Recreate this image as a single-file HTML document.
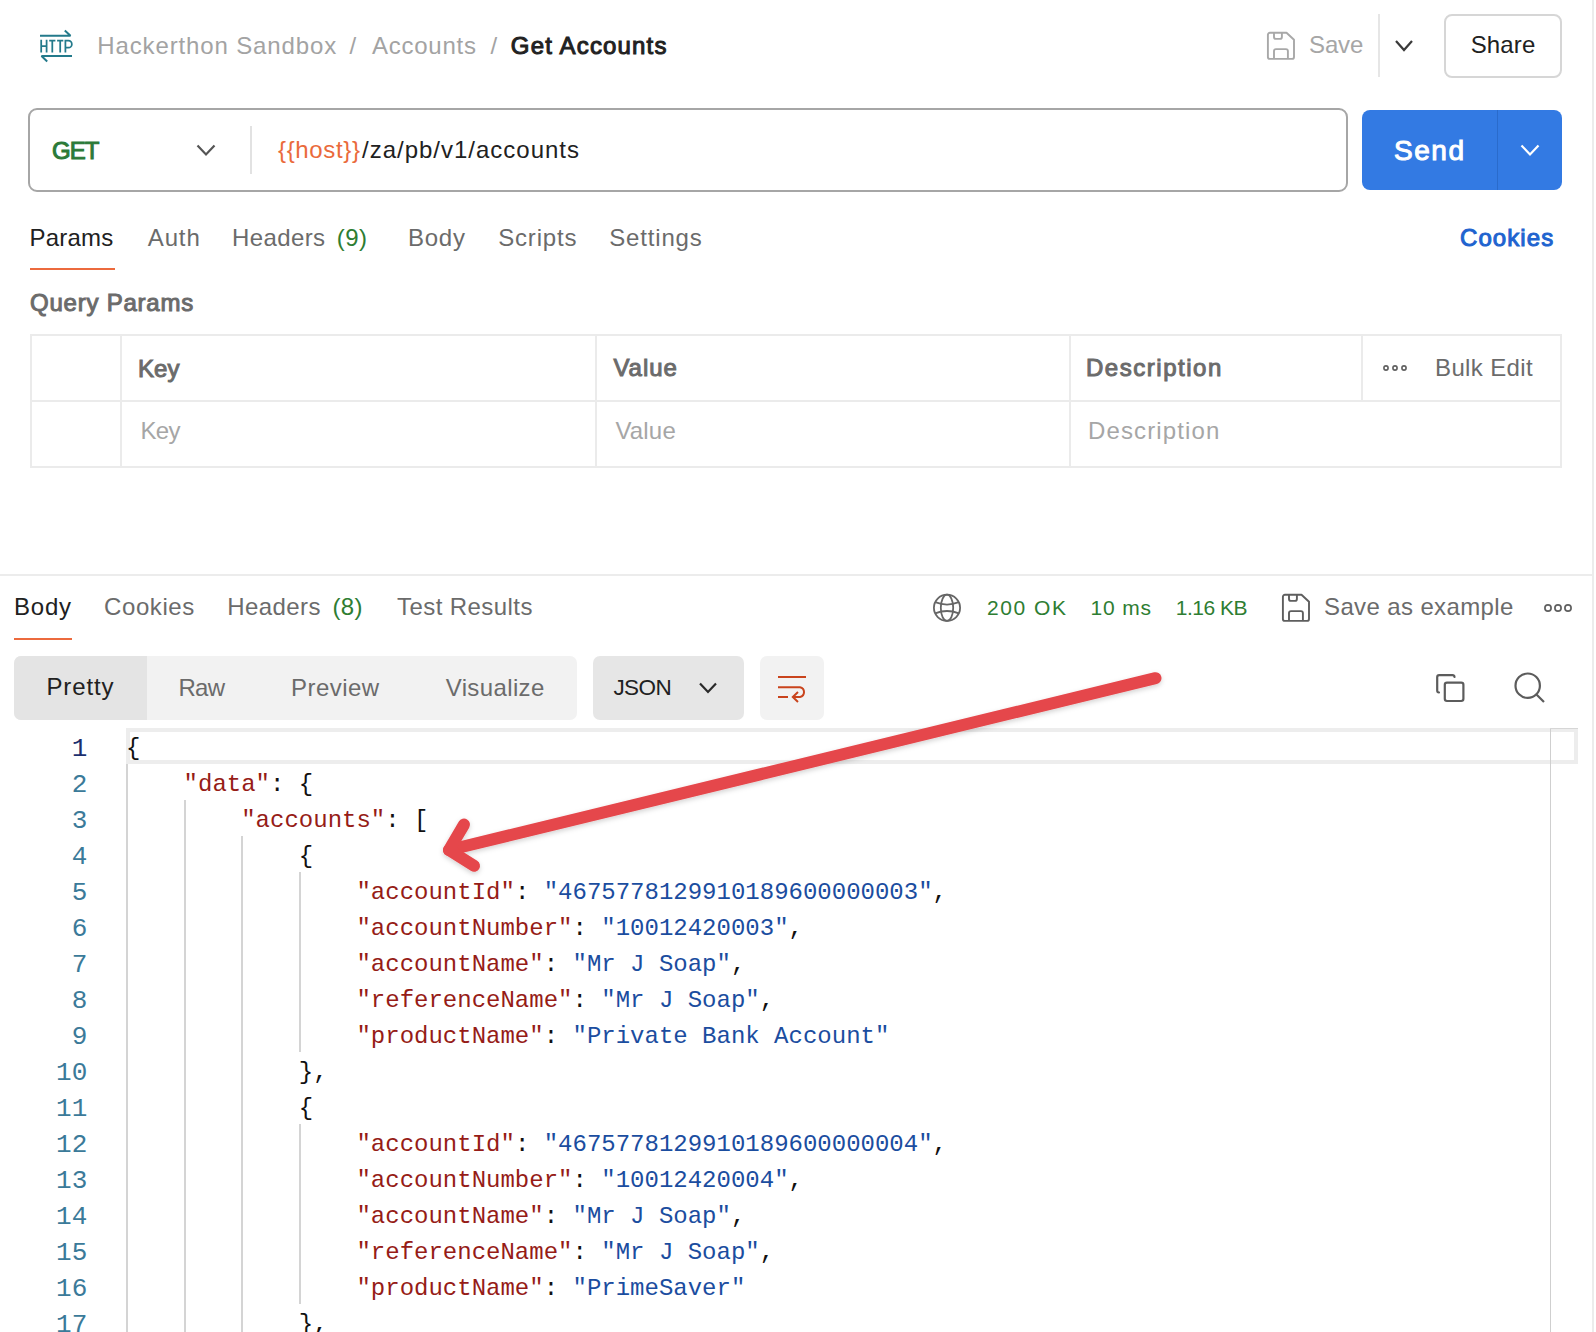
<!DOCTYPE html>
<html><head><meta charset="utf-8"><title>Get Accounts</title><style>
html,body{margin:0;padding:0;background:#fff;}
body{width:1596px;height:1332px;position:relative;overflow:hidden;font-family:"Liberation Sans", sans-serif;}
.t{position:absolute;white-space:pre;}
.abs{position:absolute;box-sizing:border-box;}
.cl{position:absolute;left:126px;height:36px;line-height:36px;font-family:"Liberation Mono", monospace;font-size:24px;white-space:pre;color:#111111;}
.ln{position:absolute;left:30px;width:57.3px;text-align:right;height:36px;line-height:36px;font-family:"Liberation Mono", monospace;font-size:26px;white-space:pre;}
.g{position:absolute;width:2px;background:#d4d4d4;}
</style></head>
<body>

<!-- window right edge -->
<div class="abs" style="left:1592px;top:0;width:2px;height:1332px;background:#ececec"></div>
<!-- header -->
<svg class="abs" style="left:0;top:0" width="100" height="80" viewBox="0 0 100 80">
  <g fill="none" stroke="#237a8b" stroke-width="2" stroke-linecap="butt" stroke-linejoin="miter">
    <path d="M40 35.7 H70.5 L64.8 30.4" stroke-linejoin="bevel"/>
    <path d="M72 56 H41.5 L47.2 61.4" stroke-linejoin="bevel"/>
    <path stroke-width="1.75" d="M41.2 39.8 V52.6 M46.6 39.8 V52.6 M41.2 46 H46.6"/>
    <path stroke-width="1.75" d="M49.2 40.7 H55.4 M52.3 40.7 V52.6"/>
    <path stroke-width="1.75" d="M57.1 40.7 H63.3 M60.2 40.7 V52.6"/>
    <path stroke-width="1.75" d="M65.4 52.6 V40.7 H68.4 A3.45 3.45 0 0 1 68.4 47.6 H65.4"/>
  </g>
</svg>
<svg class="abs" style="left:1264px;top:29px" width="34" height="34" viewBox="0 0 34 34">
  <path d="M5.9 3.8 H22.5 L30 10.8 V27.9 A2 2 0 0 1 28 29.9 H5.9 A2 2 0 0 1 3.9 27.9 V5.8 A2 2 0 0 1 5.9 3.8 Z M10 3.8 V7.9 A2 2 0 0 0 12 9.9 H15.9 A2 2 0 0 0 17.9 7.9 V3.8 M10 29.9 V22.1 A2 2 0 0 1 12 20.1 H21.9 A2 2 0 0 1 23.9 22.1 V29.9" fill="none" stroke="#a8a8a8" stroke-width="1.9" stroke-linejoin="round"/>
</svg>
<div class="abs" style="left:1378px;top:14px;width:2px;height:63px;background:#e6e6e6"></div>
<svg class="abs" style="left:1392px;top:36px" width="24" height="20" viewBox="0 0 24 20"><path d="M4 5 L12 14 L20 5" fill="none" stroke="#3a3a3a" stroke-width="2.2"/></svg>
<div class="abs" style="left:1444px;top:14px;width:118px;height:64px;border:2px solid #d6d6d6;border-radius:8px"></div>
<!-- url bar -->
<div class="abs" style="left:28px;top:108px;width:1320px;height:84px;border:2px solid #a6a6a6;border-radius:9px"></div>
<svg class="abs" style="left:193px;top:138px" width="26" height="24" viewBox="0 0 26 24"><path d="M4.5 7.5 L13 16.5 L21.5 7.5" fill="none" stroke="#555" stroke-width="2.2"/></svg>
<div class="abs" style="left:250px;top:126px;width:2px;height:48px;background:#e2e2e2"></div>
<div class="abs" style="left:1362px;top:110px;width:200px;height:80px;background:#337ae3;border-radius:8px"></div>
<div class="abs" style="left:1497px;top:110px;width:1px;height:80px;background:#2a6bcc"></div>
<svg class="abs" style="left:1517px;top:138px" width="26" height="24" viewBox="0 0 26 24"><path d="M4.5 7.5 L13 16.5 L21.5 7.5" fill="none" stroke="#fff" stroke-width="2.2"/></svg>
<!-- tabs underline -->
<div class="abs" style="left:30px;top:268px;width:85px;height:2px;background:#ec6a3d"></div>
<!-- table -->
<div class="abs" style="left:30px;top:334px;width:1532px;height:134px;border:2px solid #ebebeb"></div>
<div class="abs" style="left:30px;top:400px;width:1532px;height:2px;background:#ebebeb"></div>
<div class="abs" style="left:120px;top:334px;width:2px;height:134px;background:#ebebeb"></div>
<div class="abs" style="left:595px;top:334px;width:2px;height:134px;background:#ebebeb"></div>
<div class="abs" style="left:1069px;top:334px;width:2px;height:134px;background:#ebebeb"></div>
<div class="abs" style="left:1361px;top:334px;width:2px;height:68px;background:#ebebeb"></div>
<svg class="abs" style="left:1380px;top:360px" width="32" height="16" viewBox="0 0 32 16">
  <g fill="none" stroke="#606060" stroke-width="1.6"><circle cx="6" cy="8" r="2.1"/><circle cx="15" cy="8" r="2.1"/><circle cx="24" cy="8" r="2.1"/></g>
</svg>
<!-- response divider -->
<div class="abs" style="left:0;top:574px;width:1592px;height:2px;background:#ececec"></div>
<div class="abs" style="left:14px;top:638px;width:58px;height:2px;background:#ec6a3d"></div>
<!-- globe -->
<svg class="abs" style="left:931px;top:592px" width="32" height="32" viewBox="0 0 32 32">
  <g fill="none" stroke="#666" stroke-width="1.8"><circle cx="16" cy="15.8" r="13.1"/><ellipse cx="16" cy="15.8" rx="6.2" ry="13.1"/><path d="M4.2 10.2 Q16 15 27.8 10.2 M4.2 21.4 Q16 16.6 27.8 21.4"/></g>
</svg>
<svg class="abs" style="left:1279px;top:591px" width="34" height="34" viewBox="0 0 34 34">
  <path d="M5.9 3.8 H22.5 L30 10.8 V27.9 A2 2 0 0 1 28 29.9 H5.9 A2 2 0 0 1 3.9 27.9 V5.8 A2 2 0 0 1 5.9 3.8 Z M10 3.8 V7.9 A2 2 0 0 0 12 9.9 H15.9 A2 2 0 0 0 17.9 7.9 V3.8 M10 29.9 V22.1 A2 2 0 0 1 12 20.1 H21.9 A2 2 0 0 1 23.9 22.1 V29.9" fill="none" stroke="#5e5e5e" stroke-width="1.9" stroke-linejoin="round"/>
</svg>
<svg class="abs" style="left:1540px;top:600px" width="36" height="16" viewBox="0 0 36 16">
  <g fill="none" stroke="#606060" stroke-width="1.7"><circle cx="8" cy="8" r="3.1"/><circle cx="18" cy="8" r="3.1"/><circle cx="28" cy="8" r="3.1"/></g>
</svg>
<!-- segmented control -->
<div class="abs" style="left:14px;top:656px;width:563px;height:64px;background:#f2f2f2;border-radius:7px;overflow:hidden"><div style="width:133px;height:64px;background:#e4e4e4"></div></div>
<div class="abs" style="left:593px;top:656px;width:151px;height:64px;background:#e6e6e6;border-radius:7px"></div>
<svg class="abs" style="left:696px;top:678px" width="24" height="20" viewBox="0 0 24 20"><path d="M4 5.5 L12 14 L20 5.5" fill="none" stroke="#2a2a2a" stroke-width="2.2"/></svg>
<div class="abs" style="left:760px;top:656px;width:64px;height:64px;background:#f2f2f2;border-radius:7px"></div>
<svg class="abs" style="left:772px;top:668px" width="40" height="40" viewBox="0 0 40 40">
  <g fill="none" stroke="#c9441d" stroke-width="2"><path d="M6 9 H34"/><path d="M6 19.2 H28 A5 5 0 0 1 28 29 H21"/><path d="M6 29 H16"/><path d="M26 24 L20.8 29 L26 34"/></g>
</svg>
<!-- copy / search -->
<svg class="abs" style="left:1432px;top:670px" width="36" height="36" viewBox="0 0 36 36">
  <g fill="none" stroke="#5c5c5c" stroke-width="2.2" stroke-linecap="round"><path d="M22.5 7 A2 2 0 0 0 20.5 5.2 H7.2 A2 2 0 0 0 5.2 7.2 V20.5 A2 2 0 0 0 7 22.5"/><rect x="12.8" y="12.6" width="18.6" height="18.4" rx="2.2"/></g>
</svg>
<svg class="abs" style="left:1510px;top:668px" width="40" height="40" viewBox="0 0 40 40">
  <g fill="none" stroke="#5c5c5c" stroke-width="2.2"><circle cx="17.7" cy="17.7" r="12.2"/><path d="M26.5 26.5 L34 34"/></g>
</svg>
<!-- editor -->
<div class="abs" style="left:126px;top:728px;width:1452px;height:36px;border:4px solid #ededed"></div>
<div class="abs" style="left:1550px;top:728px;width:1px;height:604px;background:#cfcfcf"></div>
<div class="abs" style="left:1550px;top:728px;width:28px;height:1px;background:#d6d6d6"></div>

<span class="t" style="left:97.30px;top:30.58px;font-size:24px;line-height:30px;color:#a3a3a3;letter-spacing:0.868px;">Hackerthon Sandbox</span><span class="t" style="left:349.40px;top:30.58px;font-size:24px;line-height:30px;color:#a3a3a3;">/</span><span class="t" style="left:372.00px;top:30.58px;font-size:24px;line-height:30px;color:#a3a3a3;letter-spacing:0.754px;">Accounts</span><span class="t" style="left:490.40px;top:30.58px;font-size:24px;line-height:30px;color:#a3a3a3;">/</span><span class="t" style="left:510.80px;top:30.58px;font-size:24px;line-height:30px;color:#212121;-webkit-text-stroke:1.0px #212121;letter-spacing:1.175px;">Get Accounts</span><span class="t" style="left:1309.00px;top:30.48px;font-size:24px;line-height:30px;color:#a6a6a6;letter-spacing:-0.118px;">Save</span><span class="t" style="left:1470.70px;top:30.48px;font-size:24px;line-height:30px;color:#212121;letter-spacing:0.151px;">Share</span><span class="t" style="left:52.00px;top:135.98px;font-size:24px;line-height:30px;color:#2b7a38;-webkit-text-stroke:1.0px #2b7a38;letter-spacing:-0.938px;">GET</span><span class="t" style="left:278.00px;top:134.68px;font-size:24px;line-height:30px;color:#ea6a3b;letter-spacing:0.656px;">{{host}}</span><span class="t" style="left:362.00px;top:134.68px;font-size:24px;line-height:30px;color:#212121;letter-spacing:0.993px;">/za/pb/v1/accounts</span><span class="t" style="left:1394.00px;top:132.80px;font-size:28px;line-height:35px;color:#ffffff;-webkit-text-stroke:1.0px #ffffff;letter-spacing:1.560px;">Send</span><span class="t" style="left:29.50px;top:222.98px;font-size:24px;line-height:30px;color:#212121;letter-spacing:0.203px;">Params</span><span class="t" style="left:147.80px;top:222.98px;font-size:24px;line-height:30px;color:#6b6b6b;letter-spacing:0.859px;">Auth</span><span class="t" style="left:232.00px;top:222.98px;font-size:24px;line-height:30px;color:#6b6b6b;letter-spacing:0.381px;">Headers</span><span class="t" style="left:336.80px;top:222.98px;font-size:24px;line-height:30px;color:#2e7d32;letter-spacing:0.380px;">(9)</span><span class="t" style="left:408.00px;top:222.98px;font-size:24px;line-height:30px;color:#6b6b6b;letter-spacing:0.732px;">Body</span><span class="t" style="left:498.20px;top:222.98px;font-size:24px;line-height:30px;color:#6b6b6b;letter-spacing:0.825px;">Scripts</span><span class="t" style="left:609.20px;top:222.98px;font-size:24px;line-height:30px;color:#6b6b6b;letter-spacing:0.840px;">Settings</span><span class="t" style="left:1460.00px;top:222.68px;font-size:24px;line-height:30px;color:#2063cf;-webkit-text-stroke:1.0px #2063cf;letter-spacing:1.082px;">Cookies</span><span class="t" style="left:30.00px;top:287.68px;font-size:24px;line-height:30px;color:#6b6b6b;-webkit-text-stroke:1.0px #6b6b6b;letter-spacing:0.772px;">Query Params</span><span class="t" style="left:138.00px;top:353.68px;font-size:24px;line-height:30px;color:#6b6b6b;-webkit-text-stroke:1.0px #6b6b6b;letter-spacing:0.072px;">Key</span><span class="t" style="left:613.40px;top:353.38px;font-size:24px;line-height:30px;color:#6b6b6b;-webkit-text-stroke:1.0px #6b6b6b;letter-spacing:0.987px;">Value</span><span class="t" style="left:1086.00px;top:353.38px;font-size:24px;line-height:30px;color:#6b6b6b;-webkit-text-stroke:1.0px #6b6b6b;letter-spacing:1.530px;">Description</span><span class="t" style="left:1435.00px;top:353.38px;font-size:24px;line-height:30px;color:#6b6b6b;letter-spacing:0.370px;">Bulk Edit</span><span class="t" style="left:140.50px;top:415.68px;font-size:24px;line-height:30px;color:#a6a6a6;letter-spacing:-0.678px;">Key</span><span class="t" style="left:615.40px;top:415.68px;font-size:24px;line-height:30px;color:#a6a6a6;letter-spacing:0.187px;">Value</span><span class="t" style="left:1088.00px;top:415.68px;font-size:24px;line-height:30px;color:#a6a6a6;letter-spacing:1.130px;">Description</span><span class="t" style="left:14.00px;top:592.48px;font-size:24px;line-height:30px;color:#212121;letter-spacing:0.766px;">Body</span><span class="t" style="left:104.00px;top:592.48px;font-size:24px;line-height:30px;color:#6b6b6b;letter-spacing:0.599px;">Cookies</span><span class="t" style="left:227.30px;top:592.48px;font-size:24px;line-height:30px;color:#6b6b6b;letter-spacing:0.414px;">Headers</span><span class="t" style="left:332.50px;top:592.48px;font-size:24px;line-height:30px;color:#2e7d32;letter-spacing:0.330px;">(8)</span><span class="t" style="left:397.00px;top:592.48px;font-size:24px;line-height:30px;color:#6b6b6b;letter-spacing:0.426px;">Test Results</span><span class="t" style="left:987.00px;top:594.92px;font-size:21px;line-height:26px;color:#2e7d32;letter-spacing:1.559px;">200 OK</span><span class="t" style="left:1090.50px;top:594.92px;font-size:21px;line-height:26px;color:#2e7d32;letter-spacing:0.828px;">10 ms</span><span class="t" style="left:1175.70px;top:594.92px;font-size:21px;line-height:26px;color:#2e7d32;letter-spacing:-0.469px;">1.16 KB</span><span class="t" style="left:1324.00px;top:592.38px;font-size:24px;line-height:30px;color:#6b6b6b;letter-spacing:0.375px;">Save as example</span><span class="t" style="left:46.40px;top:672.38px;font-size:24px;line-height:30px;color:#212121;letter-spacing:0.883px;">Pretty</span><span class="t" style="left:178.50px;top:672.98px;font-size:24px;line-height:30px;color:#6b6b6b;letter-spacing:-0.740px;">Raw</span><span class="t" style="left:291.00px;top:672.98px;font-size:24px;line-height:30px;color:#6b6b6b;letter-spacing:0.462px;">Preview</span><span class="t" style="left:445.70px;top:672.98px;font-size:24px;line-height:30px;color:#6b6b6b;letter-spacing:0.379px;">Visualize</span><span class="t" style="left:613.40px;top:674.40px;font-size:22.5px;line-height:28px;color:#212121;letter-spacing:-0.586px;">JSON</span>
<div class="g" style="left:126px;top:764px;height:568px"></div><div class="g" style="left:184px;top:800px;height:532px"></div><div class="g" style="left:241px;top:836px;height:496px"></div><div class="g" style="left:299px;top:872px;height:180px"></div><div class="g" style="left:299px;top:1124px;height:180px"></div>
<div class="cl" style="top:731px">{</div><div class="ln" style="top:731px;color:#1b2f6e">1</div><div class="cl" style="top:767px">    <span style="color:#961c17">&quot;data&quot;</span>: {</div><div class="ln" style="top:767px;color:#3b7a99">2</div><div class="cl" style="top:803px">        <span style="color:#961c17">&quot;accounts&quot;</span>: [</div><div class="ln" style="top:803px;color:#3b7a99">3</div><div class="cl" style="top:839px">            {</div><div class="ln" style="top:839px;color:#3b7a99">4</div><div class="cl" style="top:875px">                <span style="color:#961c17">&quot;accountId&quot;</span>: <span style="color:#1b4d9f">&quot;4675778129910189600000003&quot;</span>,</div><div class="ln" style="top:875px;color:#3b7a99">5</div><div class="cl" style="top:911px">                <span style="color:#961c17">&quot;accountNumber&quot;</span>: <span style="color:#1b4d9f">&quot;10012420003&quot;</span>,</div><div class="ln" style="top:911px;color:#3b7a99">6</div><div class="cl" style="top:947px">                <span style="color:#961c17">&quot;accountName&quot;</span>: <span style="color:#1b4d9f">&quot;Mr J Soap&quot;</span>,</div><div class="ln" style="top:947px;color:#3b7a99">7</div><div class="cl" style="top:983px">                <span style="color:#961c17">&quot;referenceName&quot;</span>: <span style="color:#1b4d9f">&quot;Mr J Soap&quot;</span>,</div><div class="ln" style="top:983px;color:#3b7a99">8</div><div class="cl" style="top:1019px">                <span style="color:#961c17">&quot;productName&quot;</span>: <span style="color:#1b4d9f">&quot;Private Bank Account&quot;</span></div><div class="ln" style="top:1019px;color:#3b7a99">9</div><div class="cl" style="top:1055px">            },</div><div class="ln" style="top:1055px;color:#3b7a99">10</div><div class="cl" style="top:1091px">            {</div><div class="ln" style="top:1091px;color:#3b7a99">11</div><div class="cl" style="top:1127px">                <span style="color:#961c17">&quot;accountId&quot;</span>: <span style="color:#1b4d9f">&quot;4675778129910189600000004&quot;</span>,</div><div class="ln" style="top:1127px;color:#3b7a99">12</div><div class="cl" style="top:1163px">                <span style="color:#961c17">&quot;accountNumber&quot;</span>: <span style="color:#1b4d9f">&quot;10012420004&quot;</span>,</div><div class="ln" style="top:1163px;color:#3b7a99">13</div><div class="cl" style="top:1199px">                <span style="color:#961c17">&quot;accountName&quot;</span>: <span style="color:#1b4d9f">&quot;Mr J Soap&quot;</span>,</div><div class="ln" style="top:1199px;color:#3b7a99">14</div><div class="cl" style="top:1235px">                <span style="color:#961c17">&quot;referenceName&quot;</span>: <span style="color:#1b4d9f">&quot;Mr J Soap&quot;</span>,</div><div class="ln" style="top:1235px;color:#3b7a99">15</div><div class="cl" style="top:1271px">                <span style="color:#961c17">&quot;productName&quot;</span>: <span style="color:#1b4d9f">&quot;PrimeSaver&quot;</span></div><div class="ln" style="top:1271px;color:#3b7a99">16</div><div class="cl" style="top:1307px">            },</div><div class="ln" style="top:1307px;color:#3b7a99">17</div>

<svg class="abs" style="left:0;top:0;pointer-events:none" width="1596" height="1332" viewBox="0 0 1596 1332">
  <defs><filter id="sh" x="-10%" y="-10%" width="120%" height="130%"><feDropShadow dx="0" dy="2" stdDeviation="2.5" flood-color="#000" flood-opacity="0.18"/></filter></defs>
  <g filter="url(#sh)" fill="none" stroke="#e5474b" stroke-width="12" stroke-linecap="round" stroke-linejoin="round">
    <path d="M1155.5 678.2 L449 850"/>
    <path d="M464 824.6 L449 850 L474 865.8"/>
  </g>
</svg>

</body></html>
